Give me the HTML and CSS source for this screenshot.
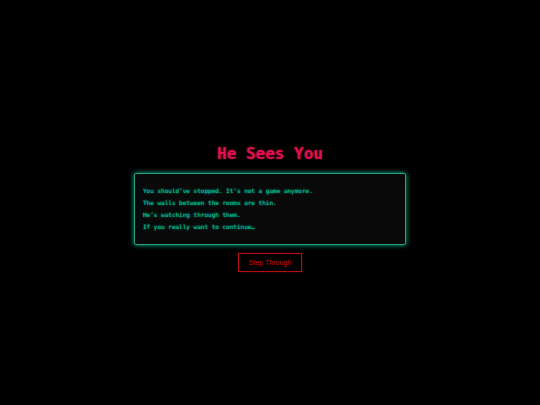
FILE: index.html
```html
<!DOCTYPE html>
<html lang="en">
<head>
<meta charset="utf-8">
<title>He Sees You</title>
<meta name="viewport" content="width=device-width, initial-scale=1">
<link rel="stylesheet" href="styles.css">
</head>
<body>
<main class="scene">
<h1 class="title">He Sees You</h1>
<section class="terminal">
<p>You should’ve stopped. It’s not a game anymore.</p>
<p>The walls between the rooms are thin.</p>
<p>He’s watching through them.</p>
<p>If you really want to continue…</p>
</section>
<button class="step" type="button">Step Through</button>
</main>
</body>
</html>
```
FILE: styles.css
```css
* {
  box-sizing: border-box;
}

body {
  margin: 0;
  background: #000;
  color: #00c89e;
  font-family: "DejaVu Sans Mono", monospace;
}

.scene {
  display: flex;
  flex-direction: column;
  align-items: center;
  justify-content: center;
  gap: 8px;
  min-height: 100vh;
  padding: 9px 0 0;
}

.title {
  margin: 0;
  color: #dc124f;
  font-size: 16px;
  line-height: 22px;
  text-shadow: 0 0 2px #a00030;
}

.terminal {
  width: calc(50% + 2px);
  padding: 11px 8px;
  border: 1px solid #27a084;
  border-radius: 2px;
  background: #090909;
  box-shadow: 0 0 5px #00b48c;
  font-size: 6px;
  line-height: 12px;
  text-shadow: 0 0 2px #00c89e;
}

.terminal p {
  margin: 0;
}

.step {
  padding: 4px 10px;
  border: 1px solid #b80d0d;
  background: #000;
  color: #c90c0c;
  font-family: "Liberation Sans", sans-serif;
  font-size: 7px;
  line-height: 9px;
  box-shadow: 0 0 1px #900;
  cursor: pointer;
}

.step:hover {
  background: #300;
}
```
